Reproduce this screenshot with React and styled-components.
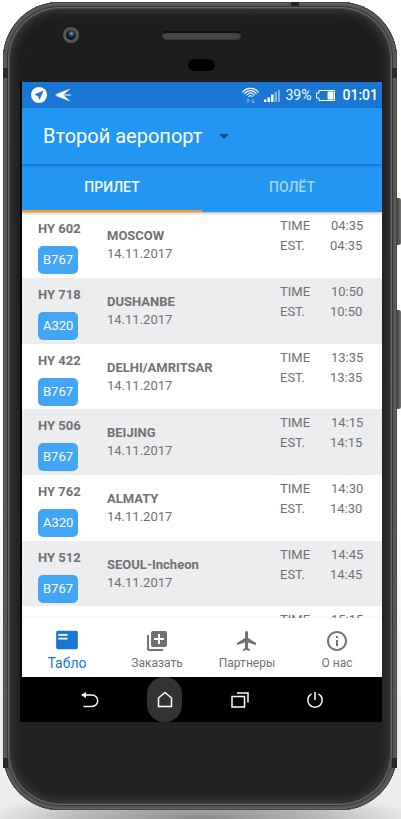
import React from 'react';
import styled, { createGlobalStyle, css } from 'styled-components';

const GlobalStyle = createGlobalStyle`
  *, *::before, *::after { box-sizing: border-box; }
  body {
    margin: 0;
    font-family: Roboto, "Noto Sans", sans-serif;
    color: #717171;
    background: #fff;
  }
  button, select { font: inherit; border: 0; padding: 0; margin: 0; background: none; color: inherit; cursor: pointer; }
`;

const Page = styled.div`
  padding: 2px 4px 9px 3px;
  overflow: hidden;
  background:
    radial-gradient(ellipse 54% 30px at 50% 100%, #8a8a8a 0%, #b8b8b8 55%, rgba(225, 225, 225, 0) 100%),
    linear-gradient(#fff 0, #fff 62%, #f0f0f0 84%, #ececec 100%);
`;

const Device = styled.div`
  position: relative;
  display: flex;
  flex-direction: column;
  padding: 0 15px 0 17px;
  border-radius: 57px;
  background: linear-gradient(#1d1d1d, #222 85%);
  box-shadow:
    inset 0 0 0 1px #444,
    inset 0 0 0 2px #636363,
    inset 0 0 0 4px #555,
    inset 0 0 0 5px #383838,
    inset 0 0 0 6px #666,
    inset 0 0 0 7px #484848,
    inset 0 0 8px 10px #3a3a3a;
`;

const SideKey = styled.span`
  position: absolute;
  left: 100%;
  top: ${p => p.$top}px;
  width: 4px;
  height: ${p => p.$length}px;
  border-radius: 0 2px 2px 0;
  background: linear-gradient(90deg, #444, #747474);
`;

const Antenna = styled.span`
  position: absolute;
  ${p => p.$side}: 0;
  ${p => p.$edge}: ${p => p.$offset}px;
  width: ${p => (p.$edge === 'right' ? 8 : 5)}px;
  height: ${p => (p.$edge === 'right' ? 4 : 10)}px;
  background: #262626;
`;

const Forehead = styled.div`
  display: grid;
  grid-template-columns: 1fr 80px 1fr;
  grid-template-rows: 28px 32px;
  height: 80px;
  padding-top: 19px;
  align-items: center;
  justify-items: center;
`;

const Camera = styled.span`
  justify-self: start;
  margin-left: 43px;
  width: 16px;
  height: 16px;
  border: 3px solid #5a5757;
  border-radius: 50%;
  background: radial-gradient(circle at 55% 35%, #7d97ab 0, #223a4f 30%, #0b1118 60%);
`;

const Speaker = styled.span`
  grid-column: 2;
  width: 79px;
  height: 9px;
  border-radius: 5px;
  background: #454343;
  border: 1px solid #3a3838;
  border-top: 2px solid #0f0f0f;
`;

const Sensor = styled.span`
  grid-column: 2;
  width: 27px;
  height: 12px;
  border-radius: 6px;
  background: #000;
`;

const Screen = styled.main`
  display: flex;
  flex-direction: column;
  border-left: 2px solid #000;
  background: #fff;
`;

const StatusBar = styled.div`
  display: flex;
  align-items: center;
  height: 26px;
  padding: 0 4px 0 9px;
  background: #1976d2;
  color: #fff;
  font-size: 14px;
  svg { display: block; }
`;

const StatusGroup = styled.div`
  display: flex;
  align-items: center;
  gap: ${p => p.$gap}px;
`;

const Spacer = styled.span`
  flex: 1;
`;

const Clock = styled.time`
  font-weight: 500;
  margin-left: 2px;
`;

const TitleBar = styled.header`
  position: relative;
  display: flex;
  align-items: center;
  gap: 16px;
  height: 56px;
  padding-left: 21px;
  background: #2196f3;
  box-shadow: 0 1px 3px rgba(0, 40, 90, 0.5);
`;

const AirportSelect = styled.select`
  appearance: none;
  font-size: 20px;
  line-height: 28px;
  color: #fff;
  outline: none;
`;

const Tabs = styled.div`
  display: grid;
  grid-template-columns: 1fr 1fr;
  height: 48px;
  background: #2196f3;
  position: relative;
  box-shadow: 0 1px 3px rgba(0, 0, 0, 0.35);
`;

const Tab = styled.button`
  font-size: 14px;
  font-weight: 500;
  border-bottom: 2px solid ${p => (p.$active ? '#f39c1f' : 'transparent')};
  color: ${p => (p.$active ? '#fff' : '#a6d5fa')};
`;

const TopBars = styled.div`
  position: relative;
  z-index: 1;
  ${TitleBar} { z-index: 2; }
`;

const FlightList = styled.ul`
  display: grid;
  grid-template-rows: 66px 66px 65px 66px 66px 65px 12px;
  margin: 0;
  padding: 0;
  list-style: none;
  overflow: hidden;
`;

const FlightRow = styled.li`
  display: grid;
  grid-template-columns: 69px 1fr 50px 52px;
  padding-left: 16px;
  font-size: 13px;
  line-height: 18px;
  overflow: hidden;
  background: #fff;
  &:nth-child(even) { background: #ebedef; }
`;

const FlightId = styled.div`
  display: flex;
  flex-direction: column;
  align-items: flex-start;
  gap: 8px;
  padding-top: 8px;
`;

const FlightNumber = styled.strong`
  font-weight: 700;
`;

const Aircraft = styled.span`
  min-width: 40px;
  padding: 0 5px;
  border-radius: 5px;
  line-height: 28px;
  text-align: center;
  color: #fff;
  background: #42a5f5;
`;

const Route = styled.div`
  display: flex;
  flex-direction: column;
  padding-top: 15px;
`;

const Times = styled.div`
  display: flex;
  flex-direction: column;
  padding-top: 4px;
  line-height: 20px;
`;

const Planned = styled.time`
  padding-left: 1px;
`;

const BottomNav = styled.nav`
  display: grid;
  grid-template-columns: repeat(4, 1fr);
  height: 59px;
  background: #fff;
  position: relative;
  box-shadow: 0 -1px 2px rgba(0, 0, 0, 0.06);
`;

const NavItem = styled.button`
  display: flex;
  flex-direction: column;
  align-items: center;
  justify-content: flex-end;
  gap: 2px;
  padding-bottom: 6px;
  font-size: 12px;
  line-height: 16px;
  svg { display: block; width: 24px; height: 24px; fill: currentColor; }
  ${p => p.$active && css`
    color: #1976d2;
    font-size: 14px;
    svg { width: 26px; height: 26px; }
  `}
`;

const SystemBar = styled.div`
  display: flex;
  justify-content: center;
  height: 45px;
  gap: 40px;
  background: #000;
`;

const SystemButton = styled.button`
  display: grid;
  place-items: center;
  width: 35px;
  border-radius: 17px;
  background: ${p => (p.$pressed ? '#333' : 'transparent')};
  svg { display: block; fill: none; stroke: #fff; stroke-width: 1.5; }
`;

const Chin = styled.div`
  height: 88px;
`;

const flights = [
  ['HY 602', 'B767', 'MOSCOW', '04:35'],
  ['HY 718', 'A320', 'DUSHANBE', '10:50'],
  ['HY 422', 'B767', 'DELHI/AMRITSAR', '13:35'],
  ['HY 506', 'B767', 'BEIJING', '14:15'],
  ['HY 762', 'A320', 'ALMATY', '14:30'],
  ['HY 512', 'B767', 'SEOUL-Incheon', '14:45'],
  ['', '', '', '15:15'],
];

const navItems = [
  ['Табло', 'M20.500 3.500h-17c-.8 0-1.500.7-1.500 1.500v14c0 .8.7 1.500 1.500 1.500h17c.8 0 1.500-.7 1.500-1.500V5c0-.8-.7-1.500-1.500-1.500zM12.500 11.500H4V10h8.500zM12.500 8H4V6.500h8.500z'],
  ['Заказать', 'M4 6H2v14c0 1.100.9 2 2 2h14v-2H4V6zm16-4H8c-1.100 0-2 .9-2 2v12c0 1.100.9 2 2 2h12c1.100 0 2-.9 2-2V4c0-1.100-.9-2-2-2zm-1 9h-4v4h-2v-4H9V9h4V5h2v4h4v2z'],
  ['Партнеры', 'M21 16v-2l-8-5V3.500c0-.83-.67-1.500-1.500-1.500S10 2.670 10 3.500V9l-8 5v2l8-2.500V19l-2 1.500V22l3.500-1 3.500 1v-1.500L13 19v-5.500l8 2.500z'],
  ['О нас', 'M11 7h2v2h-2zm0 4h2v6h-2zm1-9C6.480 2 2 6.480 2 12s4.480 10 10 10 10-4.480 10-10S17.520 2 12 2zm0 18c-4.410 0-8-3.590-8-8s3.590-8 8-8 8 3.590 8 8-3.590 8-8 8z'],
];

function Flight({ flight: [number, plane, city, time] }) {
  return (
    <FlightRow>
      <FlightId>
        {number && <FlightNumber>{number}</FlightNumber>}
        {plane && <Aircraft>{plane}</Aircraft>}
      </FlightId>
      <Route>
        {city && <strong>{city}</strong>}
        {city && <span>14.11.2017</span>}
      </Route>
      <Times>
        <span>TIME</span>
        {city && <span>EST.</span>}
      </Times>
      <Times>
        <Planned>{time}</Planned>
        {city && <time>{time}</time>}
      </Times>
    </FlightRow>
  );
}

function StatusIcons() {
  return (
    <StatusBar>
      <StatusGroup $gap={8}>
        <svg width="16" height="16" viewBox="0 0 16 16">
          <circle cx="8" cy="8" r="8" fill="#fff" />
          <path d="M12.500 3.500 3.500 7.500l3.500 1.700 1.700 3.500z" fill="#1976d2" />
        </svg>
        <svg width="17" height="14" viewBox="0 0 17 14" fill="#fff">
          <path d="M0 6.600 15.500.5 9 6.400z" />
          <path d="M0 7.400 15.500 13.500 9 7.600z" />
          <path d="M0 7 9 4.500 8 6.400h8v1.200H8l1 1.900z" />
        </svg>
      </StatusGroup>
      <Spacer />
      <StatusGroup $gap={5}>
        <svg width="17" height="17" viewBox="0 0 17 17" fill="none" stroke="#fff" strokeWidth="1.200">
          <path d="M.5 5.500C4 0 13 0 16.500 5.500M2.500 7C5.500 2.500 11.500 2.500 14.500 7M4.500 8.500C6.500 5 10.500 5 12.500 8.500M6.500 10C7.500 8 9.500 8 10.500 10" />
          <path d="M6 16v-4M4.500 13.500 6 12l1.500 1.500M11 12v4M9.500 14.500 11 16l1.500-1.500" stroke="#83b8ea" strokeWidth="1" />
        </svg>
        <svg width="16" height="13" viewBox="0 0 16 13" fill="#fff">
          <path d="M0 10.500h2.500V13H0zM3.500 8.500H6V13H3.500zM7 5.500h2.500V13H7z" />
          <path d="M10.500 3H13v10h-2.500zM14 1h2v12h-2z" opacity=".45" />
        </svg>
        <span>39%</span>
        <svg width="19" height="11" viewBox="0 0 19 11" fill="none" stroke="#fff">
          <path d="M3 .5h15.500v10H3V8H.5V3H3z" />
          <path d="M12 2h5v7h-5z" fill="#fff" />
        </svg>
        <Clock>01:01</Clock>
      </StatusGroup>
    </StatusBar>
  );
}

export default function App() {
  return (
    <Page>
      <GlobalStyle />
      <Device>
        <Antenna $side="top" $edge="right" $offset={98} />
        <Antenna $side="left" $edge="top" $offset={66} />
        <Antenna $side="right" $edge="top" $offset={66} />
        <Antenna $side="left" $edge="bottom" $offset={42} />
        <Antenna $side="right" $edge="bottom" $offset={42} />
        <SideKey $top={196} $length={47} />
        <SideKey $top={308} $length={99} />
        <Forehead>
          <Camera />
          <Speaker />
          <Sensor />
        </Forehead>
        <Screen>
          <StatusIcons />
          <TopBars>
            <TitleBar>
              <AirportSelect aria-label="Аеропорт">
                <option>Второй аеропорт</option>
              </AirportSelect>
              <svg width="10" height="5" viewBox="0 0 10 5" aria-hidden="true">
                <path d="M0 0h10L5 5z" fill="#134a78" />
              </svg>
            </TitleBar>
            <Tabs role="tablist">
              <Tab role="tab" aria-selected="true" $active>ПРИЛЕТ</Tab>
              <Tab role="tab" aria-selected="false">ПОЛЁТ</Tab>
            </Tabs>
          </TopBars>
          <FlightList>
            {flights.map((f, i) => <Flight key={i} flight={f} />)}
          </FlightList>
          <BottomNav>
            {navItems.map(([label, d], i) => (
              <NavItem key={label} $active={i === 0}>
                <svg viewBox="0 0 24 24"><path d={d} /></svg>
                {label}
              </NavItem>
            ))}
          </BottomNav>
          <SystemBar>
            <SystemButton aria-label="Назад">
              <svg width="18" height="16" viewBox="0 0 18 16">
                <path d="M2 3h9a5.500 5.500 0 0 1 0 11.500H2.500" />
                <path d="M5 0v6L0 3z" fill="#fff" stroke="none" />
              </svg>
            </SystemButton>
            <SystemButton aria-label="Домой" $pressed>
              <svg width="16" height="17" viewBox="0 0 16 17">
                <path d="M1.500 15.500V7L8 1.500 14.500 7v8.500z" />
              </svg>
            </SystemButton>
            <SystemButton aria-label="Недавние">
              <svg width="18" height="16" viewBox="0 0 18 16">
                <path d="M1 4.500h12.500v10.500H1zM6 1h11v9.500" />
              </svg>
            </SystemButton>
            <SystemButton aria-label="Питание">
              <svg width="18" height="18" viewBox="0 0 18 18">
                <path d="M5.500 2.800a7.200 7.200 0 1 0 7 0M9 1v8" />
              </svg>
            </SystemButton>
          </SystemBar>
        </Screen>
        <Chin />
      </Device>
    </Page>
  );
}
